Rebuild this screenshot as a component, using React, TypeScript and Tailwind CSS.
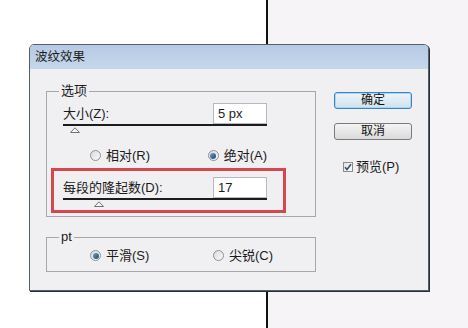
import { useState } from "react";

const FONT = "font-['Liberation_Sans','Noto_Sans_CJK_SC',sans-serif]";

export default function App() {
  const [mode, setMode] = useState("absolute");
  const [edge, setEdge] = useState("smooth");
  const [preview, setPreview] = useState(true);
  const [size, setSize] = useState("5 px");
  const [ridges, setRidges] = useState("17");

  return (
    <div className={`relative flex h-[328px] w-[468px] overflow-hidden ${FONT} text-[13px] leading-[16px] text-[#1b1b1b]`}>
      <div className="w-[266px] bg-white" />
      <div className="w-[2px] bg-[#111]" />
      <div className="flex-1 bg-[#f6f4f6]" />

      {/* dialog window */}
      <div className="absolute left-[29px] top-[44px] flex h-[247px] w-[400px] flex-col rounded-t-[5px] border border-[#53606c] bg-[#f0eff2] shadow-[1px_1px_0_#22313a]">
        <div className="flex h-[24px] items-center rounded-t-[4px] bg-gradient-to-b from-[#b6cae3] to-[#c6d7ec] pl-[5px] text-[12.5px] text-[#1e1e1e]">
          波纹效果
        </div>

        <div className="flex gap-[18px] px-[16px] pt-[14px]">
          <div className="flex w-[270px] flex-col">
            <fieldset className="min-w-0 border border-[#a7a7a9] pb-[3px] pl-[16px]">
              <legend className="-ml-[4px] px-[2px]">选项</legend>
              <div className="flex w-[204px] flex-col">
                <SliderField
                  label="大小(Z):"
                  value={size}
                  onChange={setSize}
                  thumb="ml-[7px]"
                  top="mt-[4px]"
                />
                <div className="mt-[14px] flex h-[17px] items-center pl-[27px]">
                  <Radio label="相对(R)" checked={mode === "relative"} onClick={() => setMode("relative")} wide />
                  <Radio label="绝对(A)" checked={mode === "absolute"} onClick={() => setMode("absolute")} />
                </div>
                <div className="-ml-[12px] mt-[4px] w-[235px] border-[3px] border-[#d4474d] pb-[3px] pl-[9px] pr-[16px] pt-[6px]">
                  <SliderField
                    label="每段的隆起数(D):"
                    value={ridges}
                    onChange={setRidges}
                    thumb="ml-[31px]"
                    top=""
                  />
                </div>
              </div>
            </fieldset>

            <fieldset className="mt-[12px] min-w-0 border border-[#a7a7a9] pb-[7px] pl-[16px] pt-[2px]">
              <legend className="-ml-[4px] px-[2px]">pt</legend>
              <div className="flex h-[17px] items-center pl-[27px]">
                <Radio label="平滑(S)" checked={edge === "smooth"} onClick={() => setEdge("smooth")} wide />
                <Radio label="尖锐(C)" checked={edge === "sharp"} onClick={() => setEdge("sharp")} />
              </div>
            </fieldset>
          </div>

          <div className="mt-[9px] flex w-[78px] flex-col">
            <button className="h-[17px] rounded-[3px] border border-[#3d85b8] bg-gradient-to-b from-[#eef5fa] to-[#cfe2ee] text-[12px] leading-[15px] text-[#111] shadow-[inset_0_0_0_1px_#a9d7f1]">
              确定
            </button>
            <button className="mt-[14px] h-[17px] rounded-[3px] border border-[#7a7a7a] bg-gradient-to-b from-[#f4f4f4] to-[#dadada] text-[12px] leading-[15px] text-[#111]">
              取消
            </button>
            <label className="mt-[19px] flex items-center pl-[9px]" onClick={() => setPreview((p) => !p)}>
              <span className="flex h-[10px] w-[10px] items-center justify-center border border-[#8a8c8e] bg-gradient-to-br from-[#e2e3e6] to-[#fbfbfb]">
                {preview && (
                  <svg width="8" height="8" viewBox="0 0 8 8">
                    <path d="M1 4.2 L3 6.4 L7 1.2" fill="none" stroke="#3b4f6e" strokeWidth="1.6" />
                  </svg>
                )}
              </span>
              <span className="ml-[3px]">预览(P)</span>
            </label>
          </div>
        </div>
      </div>
    </div>
  );
}

function SliderField({
  label,
  value,
  onChange,
  thumb,
  top,
}: {
  label: string;
  value: string;
  onChange: (v: string) => void;
  thumb: string;
  top: string;
}) {
  return (
    <div className={`flex flex-col ${top}`}>
      <div className="flex h-[21px] items-center justify-between">
        <span className="whitespace-nowrap">{label}</span>
        <input
          value={value}
          onChange={(e) => onChange(e.target.value)}
          className="h-[21px] w-[54px] border border-[#b5b9c2] bg-white px-[4px] text-[13px] outline-none"
        />
      </div>
      <div className="h-[2px] bg-[#1c1c1c]" />
      <svg width="10" height="6" viewBox="0 0 10 6" className={`mt-[1px] ${thumb}`}>
        <path d="M0.5 5.5 L5 0.8 L9.5 5.5 Z" fill="#f4f4f4" stroke="#737373" strokeWidth="1" />
      </svg>
    </div>
  );
}

function Radio({
  label,
  checked,
  onClick,
  wide,
}: {
  label: string;
  checked: boolean;
  onClick: () => void;
  wide?: boolean;
}) {
  return (
    <div className={`flex cursor-default items-center ${wide ? "w-[123px]" : ""}`} onClick={onClick}>
      <span className="flex h-[11px] w-[11px] items-center justify-center rounded-full border border-[#8f9194] bg-gradient-to-br from-[#d9dadd] to-[#fafafa]">
        {checked && <span className="h-[6px] w-[6px] rounded-full bg-gradient-to-br from-[#6ea3cf] to-[#17456f]" />}
      </span>
      <span className="ml-[5px] whitespace-nowrap">{label}</span>
    </div>
  );
}
